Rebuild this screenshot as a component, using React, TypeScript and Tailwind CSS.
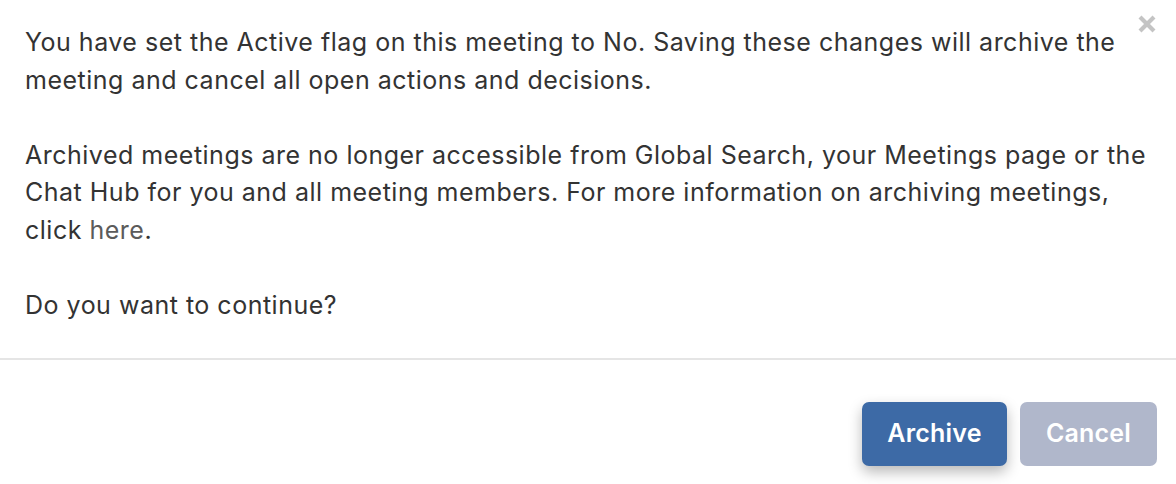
import React from "react";

const ArchiveDialog: React.FC = () => {
	return (
		<div className="relative w-[1176px] h-[484px] bg-white font-[Inter,sans-serif] text-[#333333]">
			<button className="absolute right-[18px] top-[12px] w-[22px] h-[24px] flex items-center justify-center text-[#c4c4c4]">
				<svg width="20" height="20" viewBox="0 0 20 20">
					<path d="M3 3 L17 17 M17 3 L3 17" stroke="currentColor" strokeWidth="4.2" strokeLinecap="butt" />
				</svg>
			</button>

			{/* Body */}
			<div className="pl-[25px] pr-[25px] pt-[24px] pb-[32px] text-[25px] tracking-[0.5px] leading-[37.5px] h-[358px]">
				<p>
					You have set the Active flag on this meeting to No. Saving these changes will archive the
					<br />
					meeting and cancel all open actions and decisions.
				</p>
				<p className="mt-[37.5px]">
					Archived meetings are no longer accessible from Global Search, your Meetings page or the
					<br />
					Chat Hub for you and all meeting members. For more information on archiving meetings,
					<br />
					click <a className="text-[#5b5b5b]">here</a>.
				</p>
				<p className="mt-[37.5px]">Do you want to continue?</p>
			</div>

			<div className="h-[2px] bg-[#e5e5e5]" />

			{/* Footer */}
			<div className="flex justify-end gap-[13px] pt-[42px] pr-[19px]">
				<button className="w-[145px] h-[64px] rounded-[7px] bg-[#3d6aa6] text-white text-[25px] tracking-[0.2px] font-semibold shadow-[0_6px_14px_rgba(0,0,0,0.28)]">
					Archive
				</button>
				<button className="w-[137px] h-[64px] rounded-[7px] bg-[#b0b7cb] text-white text-[25px] tracking-[0.2px] font-semibold">
					Cancel
				</button>
			</div>
		</div>
	);
};

export default function App() {
	return <ArchiveDialog />;
}
